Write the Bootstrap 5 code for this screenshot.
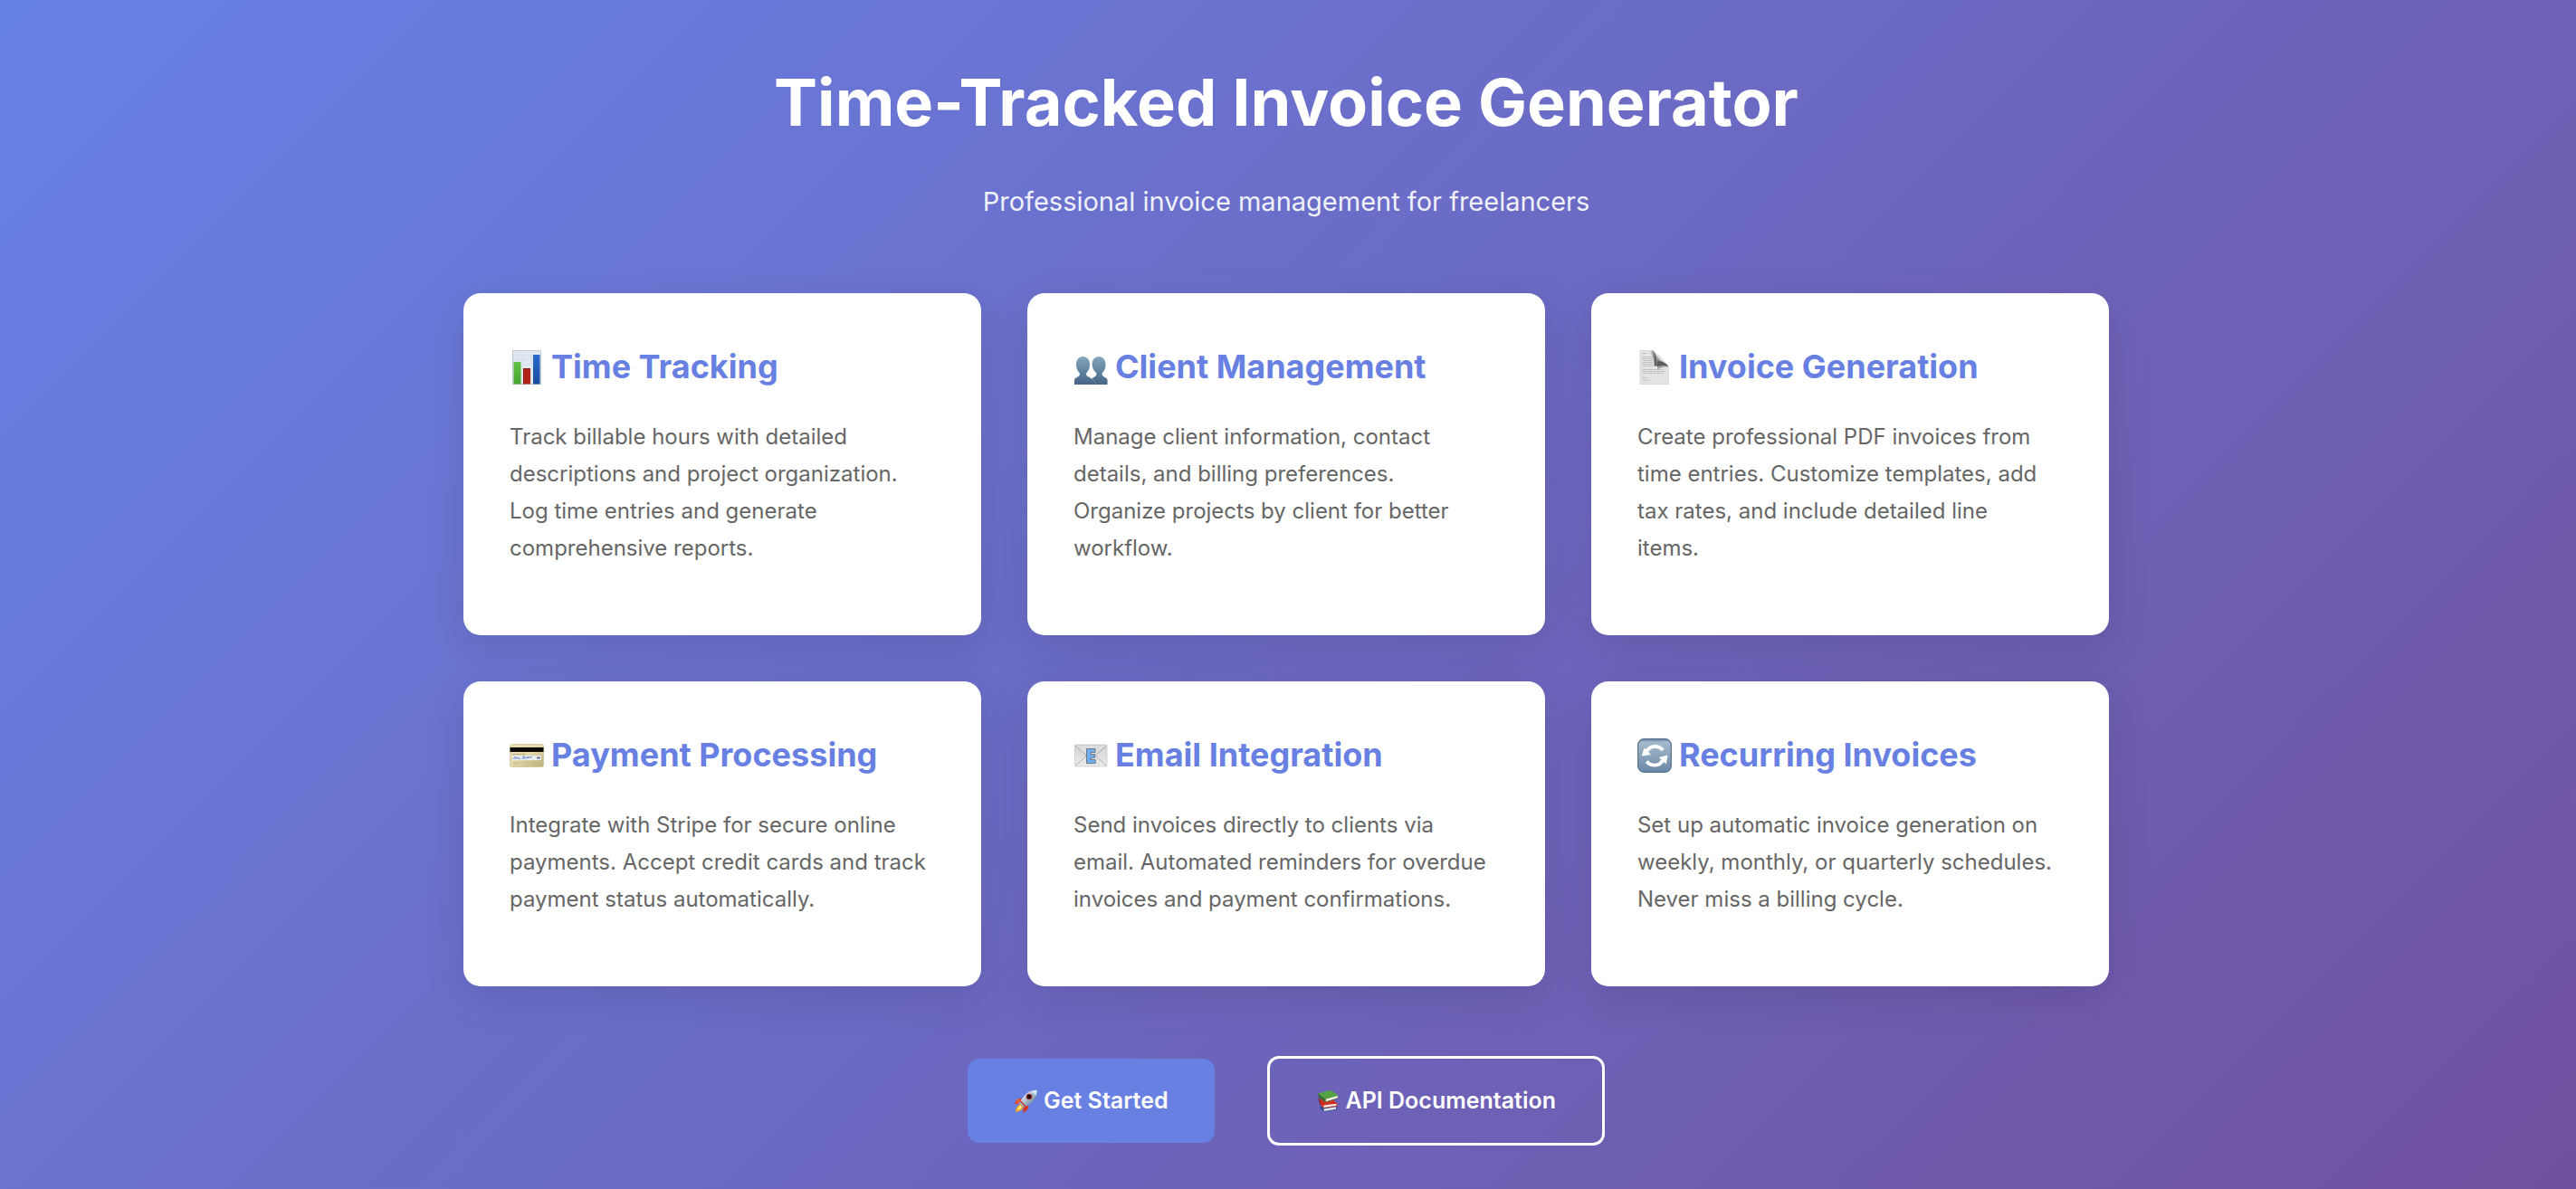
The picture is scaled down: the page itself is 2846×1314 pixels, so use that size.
<!DOCTYPE html>
<html lang="en">
<head>
<meta charset="utf-8">
<meta name="viewport" content="width=device-width, initial-scale=1">
<title>Time-Tracked Invoice Generator</title>
<link href="https://cdn.jsdelivr.net/npm/bootstrap@5.3.0/dist/css/bootstrap.min.css" rel="stylesheet">
<style>
  body {
    font-family: Inter, "Liberation Sans", sans-serif;
    font-size: 24px;
    line-height: 41px;
    min-height: 100vh;
    padding-right: 4px;
    background: linear-gradient(135deg, #6782e6 0%, #70519f 100%) no-repeat fixed;
  }
  .page-wrap { max-width: 1920px; padding: 51px; }
  .page-title { font-size: 72px; line-height: 123px; font-weight: 700; margin-bottom: 24px; }
  .page-tagline { font-size: 29px; line-height: 50px; opacity: .9; margin-bottom: 76px; }
  .feature-grid { --bs-gutter-x: 51px; --bs-gutter-y: 51px; }
  .feature-card {
    border: 0;
    border-radius: 19px;
    padding: 51px;
    box-shadow: 0 13px 48px rgba(0, 0, 0, .1);
  }
  .feature-title { font-size: 36px; line-height: 61px; font-weight: 700; color: #6780e2; gap: 8px; margin-bottom: 26px; }
  .feature-title svg { width: 38px; height: 38px; flex: none; }
  .feature-text { color: #666; margin-bottom: 25px; }
  .actions { gap: 58px; margin-top: 77px; }
  .btn-action { font-size: 25px; line-height: 41px; font-weight: 600; padding: 26px 51px; border: 0; border-radius: 13px; gap: 7px; }
  .btn-action svg { width: 26px; height: 26px; flex: none; }
  .btn-start, .btn-start:hover { background: #6780e2; color: #fff; }
  .btn-docs, .btn-docs:hover { border: 3px solid #fff; color: #fff; }
</style>
</head>
<body>
<div class="container-fluid page-wrap">
  <header class="text-center text-white">
    <h1 class="page-title">Time-Tracked Invoice Generator</h1>
    <p class="page-tagline">Professional invoice management for freelancers</p>
  </header>

  <main>
    <div class="row row-cols-1 row-cols-md-2 row-cols-xl-3 feature-grid">
      <div class="col">
        <section class="card feature-card h-100">
          <h3 class="feature-title d-flex align-items-center">
            <svg viewBox="0 0 38 38" aria-hidden="true">
              <defs><linearGradient id="gG" x2="0" y2="1"><stop stop-color="#5fc242"/><stop offset="1" stop-color="#48a430"/></linearGradient>
              <linearGradient id="gB" x2="0" y2="1"><stop stop-color="#2a6bcd"/><stop offset="1" stop-color="#184a9c"/></linearGradient></defs>
              <rect x="3" width="32" height="38" fill="#e0e8f0"/>
              <path d="M3 .5h32" stroke="#c4ccd2"/>
              <path d="M3 6h32M3 11h32M3 16h32M3 21h32M3 26h32M3 31h32M9 1v36M14 1v36M24 1v36" stroke="#d3dde8" stroke-width=".5"/>
              <path d="M3.500 1v37M34.500 1v37M3 37.500h32" stroke="#bcc6cc"/>
              <rect x="4.500" y="13" width="8" height="24.500" fill="url(#gG)"/>
              <rect x="15" y="20" width="8" height="17.500" fill="#b02318"/><path d="M15.500 37.500v-17h7" stroke="#8c1710" fill="none"/>
              <rect x="26" y="5" width="7.500" height="32.500" fill="url(#gB)"/>
            </svg>
            <span>Time Tracking</span>
          </h3>
          <p class="feature-text">Track billable hours with detailed descriptions and project organization. Log time entries and generate comprehensive reports.</p>
        </section>
      </div>
      <div class="col">
        <section class="card feature-card h-100">
          <h3 class="feature-title d-flex align-items-center">
            <svg viewBox="0 0 38 38" aria-hidden="true">
              <defs><linearGradient id="gP" gradientUnits="userSpaceOnUse" x1="0" y1="7" x2="0" y2="38"><stop stop-color="#84a5bd"/><stop offset=".55" stop-color="#5f829f"/><stop offset="1" stop-color="#456486"/></linearGradient></defs>
              <g fill="url(#gP)">
                <path d="M10.500 7C15 7 18 10.500 18 16c0 4-1.500 7-3.500 9-.8 1-.5 2.500.5 3.500 1.200 1.200 4.500 1.500 5.500 4L21 38H1v-5c0-2.500 3.500-3 5-4.500 1-1 1.300-2.500.5-3.500C4.500 23 3 20 3 16c0-5.500 3-9 7.500-9z"/>
                <path d="M28 7c4.500 0 7.500 3.500 7.500 9 0 4-1.500 7-3.500 9-.8 1-.5 2.500.5 3.500 1.500 1.500 5 2 5 4.500v5H20v-6c1-2 3.500-2.300 4.500-3.500s1.300-2.500.5-3.500c-2-2-4.500-5-4.500-9 0-5.500 3-9 7.500-9z"/>
              </g>
              <path d="M18.500 31l3 1.500 3.500 4" stroke="#7f9cb4" fill="none" stroke-width=".7"/>
            </svg>
            <span>Client Management</span>
          </h3>
          <p class="feature-text">Manage client information, contact details, and billing preferences. <br>Organize projects by client for better workflow.</p>
        </section>
      </div>
      <div class="col">
        <section class="card feature-card h-100">
          <h3 class="feature-title d-flex align-items-center">
            <svg viewBox="0 0 38 38" aria-hidden="true">
              <defs><linearGradient id="gF" x1="0" y1="1" x2="1" y2="0"><stop offset=".1" stop-color="#333"/><stop offset=".35" stop-color="#777"/><stop offset=".5" stop-color="#e4e4e4"/><stop offset="1" stop-color="#fff"/></linearGradient>
              <linearGradient id="gS" x2="1" y2="0"><stop offset=".4" stop-color="#e2e2e2"/><stop offset="1" stop-color="#444"/></linearGradient></defs>
              <path d="M3 .5h14c4 1 4 8 4 14 5 0 11 1 13.500 4V37.500H3z" fill="#e3e3e3" stroke="#cfcfcf" stroke-width=".7"/>
              <path d="M9 .5h8c4 1 4.500 8 4.500 17h-3C18.500 9 17 3 9 .5z" fill="url(#gS)"/>
              <path d="M17 .5c4 3 5 8 4.500 17 5-2 10-1 13 .8C31 12 25 5 17 .5z" fill="url(#gF)"/>
              <path d="M22 12.500c5-.8 9 1 12.500 5.500-4-1-8-.5-12.500 1z" fill="#5c5c5c"/>
              <path d="M22 18c5-1.200 9-1 12 .5-4-.5-8 .5-12 3z" fill="#a8a8a8"/>
              <path d="M5.500 3.500h5M5.500 7.500h11M5.500 9.500h12M5.500 11.500h12M5.500 13.500h12M5.500 15.500h12M5.500 17.500h12M5.500 21.500h24M5.500 23.500h25M5.500 25.500h24M5.500 30.500h5M5.500 33h8" stroke="#bcbcbc" stroke-width="1" stroke-dasharray="4 .6 2.500 .6"/>
            </svg>
            <span>Invoice Generation</span>
          </h3>
          <p class="feature-text">Create professional PDF invoices from time entries. Customize templates, add tax rates, and include detailed line <br>items.</p>
        </section>
      </div>
      <div class="col">
        <section class="card feature-card h-100">
          <h3 class="feature-title d-flex align-items-center">
            <svg viewBox="0 0 38 38" aria-hidden="true">
              <defs><linearGradient id="gC" x2="1" y2="1"><stop stop-color="#e9dfb4"/><stop offset=".5" stop-color="#e2d8a8"/><stop offset="1" stop-color="#b9ad78"/></linearGradient></defs>
              <rect x=".5" y="6.500" width="37" height="25" rx="2" fill="url(#gC)" stroke="#c9c095" stroke-width=".7"/>
              <rect x=".5" y="10" width="37" height="5" fill="#0b0b08"/>
              <path d="M3 17.500h15" stroke="#a99f74" stroke-width=".8" stroke-dasharray="3 .6"/>
              <rect x="3" y="19" width="32" height="5" fill="#e9edf2"/>
              <path d="M4.500 22.500c1-3 2-3 1.500 0 1-2 2-2 2 0 1-2 1.500-2 2 0l2-.5M14 22.800l1.500-3.300c2-.5 1 2-.5 2 1 1 2 1.500 3-.5 1 2 1.500 1.500 2-1l.5 2c1-2 2-2 2.500 0l1.500-2.500" fill="none" stroke="#5578bd" stroke-width=".8"/>
              <rect x="30" y="20.500" width="4" height="2" fill="#717b8a"/>
              <path d="M4 26.500h29M4 28.500h6" stroke="#bdb386" stroke-width=".7" stroke-dasharray="5 1"/>
            </svg>
            <span>Payment Processing</span>
          </h3>
          <p class="feature-text">Integrate with Stripe for secure online payments. Accept credit cards and track payment status automatically.</p>
        </section>
      </div>
      <div class="col">
        <section class="card feature-card h-100">
          <h3 class="feature-title d-flex align-items-center">
            <svg viewBox="0 0 38 38" aria-hidden="true">
              <defs><linearGradient id="gM" x2="0" y2="1"><stop stop-color="#d2d2d2"/><stop offset="1" stop-color="#ebebeb"/></linearGradient></defs>
              <rect x="1.500" y="7" width="35.500" height="24" rx="1" fill="url(#gM)" stroke="#c4c4c4" stroke-width=".7"/>
              <path d="M2 30.500L14.500 19M36.500 30.500L24 19" stroke="#b3b3b3"/>
              <path d="M2 8l15 13.500q2.200 1.800 4.500 0L36.500 8" fill="#dedede" stroke="#a8a8a8" stroke-width="1"/>
              <path d="M14.500 11.500h9.500v4h-5v2.200h4.500v3.600h-4.500v2.300h5.200v4h-9.700z" fill="#6cb0f3" stroke="#6c7885" stroke-width="1"/>
            </svg>
            <span>Email Integration</span>
          </h3>
          <p class="feature-text">Send invoices directly to clients via email. Automated reminders for overdue invoices and payment confirmations.</p>
        </section>
      </div>
      <div class="col">
        <section class="card feature-card h-100">
          <h3 class="feature-title d-flex align-items-center">
            <svg viewBox="0 0 38 38" aria-hidden="true">
              <defs><linearGradient id="gR" x2="0" y2="1"><stop stop-color="#6583a0"/><stop offset=".1" stop-color="#a3b9cb"/><stop offset=".5" stop-color="#8ca5bb"/><stop offset="1" stop-color="#6987a5"/></linearGradient></defs>
              <rect x=".7" y=".7" width="36.600" height="36.600" rx="6.500" fill="url(#gR)" stroke="#56728e" stroke-width="1.200"/>
              <path d="M9.500 16c2-5 6-7 10-7 3.500 0 6.500 1.300 8.700 4" fill="none" stroke="#fff" stroke-width="3.800"/>
              <path d="M28.800 22.500c-2 5-5.500 7.200-9.800 7.200-3.500 0-6.500-1.500-8.700-4.200" fill="none" stroke="#fff" stroke-width="3.800"/>
              <path d="M7.500 10.500l7.500 7.500L4.800 19.500zM33.500 18.500l-1.700 10-8-7.500z" fill="#fff"/>
            </svg>
            <span>Recurring Invoices</span>
          </h3>
          <p class="feature-text">Set up automatic invoice generation on weekly, monthly, or quarterly schedules. Never miss a billing cycle.</p>
        </section>
      </div>
    </div>
  </main>

  <div class="actions d-flex flex-wrap justify-content-center align-items-center">
    <a class="btn btn-action btn-start d-inline-flex align-items-center" href="#start">
      <svg viewBox="0 0 26 26" aria-hidden="true">
        <defs><linearGradient id="gK" x2="1" y2="1"><stop offset=".2" stop-color="#e2eaf0"/><stop offset=".5" stop-color="#a9bccb"/><stop offset="1" stop-color="#3f5c78"/></linearGradient></defs>
        <path d="M9 9.500L3 11 .8 16.500l5.500-1.200z" fill="#e2442c"/><path d="M16.500 17l-1.300 5.500L10 25.500l1-6z" fill="#d8301f"/>
        <path d="M3 11l2.500 1-1 3" stroke="#f59a4a" stroke-width=".8" fill="none"/>
        <path d="M7 16l3.500 3.500c-1 3-4.500 5-8.500 5.500.2-4 2-7.500 5-9z" fill="#f6a623"/><path d="M7.500 17.500l1.500 1.500c-1 2-3 3.500-5 4 .3-2 1.500-4.500 3.500-5.500z" fill="#fff08a"/>
        <path d="M25.500.8c.5 7-3 13.700-14 19L6.500 15C11.500 4.500 18 .5 25.500.8z" fill="url(#gK)"/>
        <path d="M25.500.8c.1 2-.2 4-1 6L20 2c2-.9 3.700-1.200 5.500-1.200z" fill="#dbe8f1"/>
        <path d="M7.500 13l5.500 5.800" stroke="#c4361f" stroke-width="1.400"/>
        <circle cx="17" cy="8" r="3.300" fill="#a5261f"/><circle cx="17" cy="8" r="2.200" fill="#16161c"/>
      </svg>
      <span>Get Started</span>
    </a>
    <a class="btn btn-action btn-docs d-inline-flex align-items-center" href="#docs">
      <svg viewBox="0 0 26 26" aria-hidden="true">
        <path d="M4 18.500l12 .5 7 0v3L9.500 24.800 5.500 22z" fill="#2e4f94"/><path d="M8.500 21.500L22 19.300v2.400L9 24z" fill="#e2e6ea"/>
        <path d="M3.800 11L17 10l6.500 5.500v3L8.500 20.800 4.500 17z" fill="#cf2f24"/><path d="M8.500 17.500l14-1.800v2l-14 2.200z" fill="#f1ece6"/>
        <path d="M2 4.500L15.500.8 24.500 6v1L10.500 11z" fill="#55a245"/><path d="M2 4.500L10.500 11l-.3 3.200L2.800 8z" fill="#2e6f2c"/>
        <path d="M10.800 10.800l13-3.700v2.500l-13 4z" fill="#f4f3ee"/><path d="M10.500 13.900l14-4.300" stroke="#3f8b38" stroke-width=".8"/>
        <path d="M3 8l2.500 8-.8 1-2-6z" fill="#7a211e"/>
      </svg>
      <span>API Documentation</span>
    </a>
  </div>
</div>
<script src="https://cdn.jsdelivr.net/npm/bootstrap@5.3.0/dist/js/bootstrap.bundle.min.js"></script>
</body>
</html>
